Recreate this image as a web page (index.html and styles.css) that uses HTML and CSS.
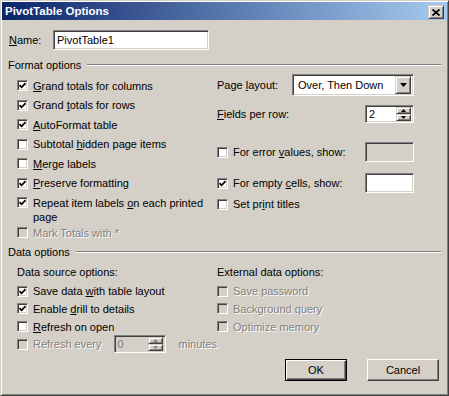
FILE: index.html
```html
<!DOCTYPE html>
<html lang="en">
<head>
    <meta charset="UTF-8">
    <title>PivotTable Options</title>
    <link rel="stylesheet" href="styles.css">
</head>
<body>
<div class="dialog">
    <div class="titlebar">
        <span class="title">PivotTable Options</span>
        <span class="close-btn">
            <svg width="8" height="7" viewBox="0 0 8 7"><path d="M0.5 0.5 7.5 6.5 M7.5 0.5 0.5 6.5" stroke="#000" stroke-width="1.8"/></svg>
        </span>
    </div>

    <div class="body">
        <div class="name-row">
            <span class="name-label"><u>N</u>ame:</span>
            <div class="field name-field">PivotTable1</div>
        </div>

        <div class="group-head"><span>Format options</span><span class="rule"></span></div>
        <div class="group format-group">
            <div class="col left-col">
                <div class="check-row"><span class="box"><svg width="7" height="7" viewBox="0 0 7 7"><path d="M0.5 3.2 2.6 5.3 6.5 1.2" fill="none" stroke="#000" stroke-width="1.7"/></svg></span><span><u>G</u>rand totals for columns</span></div>
                <div class="check-row"><span class="box"><svg width="7" height="7" viewBox="0 0 7 7"><path d="M0.5 3.2 2.6 5.3 6.5 1.2" fill="none" stroke="#000" stroke-width="1.7"/></svg></span><span>Grand <u>t</u>otals for rows</span></div>
                <div class="check-row"><span class="box"><svg width="7" height="7" viewBox="0 0 7 7"><path d="M0.5 3.2 2.6 5.3 6.5 1.2" fill="none" stroke="#000" stroke-width="1.7"/></svg></span><span><u>A</u>utoFormat table</span></div>
                <div class="check-row"><span class="box"></span><span>Subtotal <u>h</u>idden page items</span></div>
                <div class="check-row"><span class="box"></span><span><u>M</u>erge labels</span></div>
                <div class="check-row"><span class="box"><svg width="7" height="7" viewBox="0 0 7 7"><path d="M0.5 3.2 2.6 5.3 6.5 1.2" fill="none" stroke="#000" stroke-width="1.7"/></svg></span><span><u>P</u>reserve formatting</span></div>
                <div class="check-row wrap"><span class="box"><svg width="7" height="7" viewBox="0 0 7 7"><path d="M0.5 3.2 2.6 5.3 6.5 1.2" fill="none" stroke="#000" stroke-width="1.7"/></svg></span><span>Repeat item labels <u>o</u>n each printed<br>page</span></div>
                <div class="check-row mark-row dis"><span class="box off"></span><span>Mark Totals with *</span></div>
            </div>
            <div class="col right-col">
                <div class="ctl-row layout-row">
                    <span>Page <u>l</u>ayout:</span>
                    <div class="select">
                        <span>Over, Then Down</span>
                        <span class="drop"><svg width="7" height="4" viewBox="0 0 7 4"><path d="M0 0H7L3.5 4Z" fill="#000"/></svg></span>
                    </div>
                </div>
                <div class="ctl-row fields-row">
                    <span><u>F</u>ields per row:</span>
                    <div class="spin">
                        <span class="spin-val">2</span>
                        <span class="spin-btns">
                            <span class="spin-btn"><svg width="5" height="3" viewBox="0 0 5 3"><path d="M0 3H5L2.5 0Z" fill="#000"/></svg></span>
                            <span class="spin-btn"><svg width="5" height="3" viewBox="0 0 5 3"><path d="M0 0H5L2.5 3Z" fill="#000"/></svg></span>
                        </span>
                    </div>
                </div>
                <div class="ctl-row error-row">
                    <div class="check-row"><span class="box"></span><span>For error <u>v</u>alues, show:</span></div>
                    <div class="field small-field off"></div>
                </div>
                <div class="ctl-row empty-row">
                    <div class="check-row"><span class="box"><svg width="7" height="7" viewBox="0 0 7 7"><path d="M0.5 3.2 2.6 5.3 6.5 1.2" fill="none" stroke="#000" stroke-width="1.7"/></svg></span><span>For empty <u>c</u>ells, show:</span></div>
                    <div class="field small-field"></div>
                </div>
                <div class="check-row titles-row"><span class="box"></span><span>Set pr<u>i</u>nt titles</span></div>
            </div>
        </div>

        <div class="group-head data-head"><span>Data options</span><span class="rule"></span></div>
        <div class="group data-group">
            <div class="col">
                <div class="sub-label">Data source options:</div>
                <div class="check-row"><span class="box"><svg width="7" height="7" viewBox="0 0 7 7"><path d="M0.5 3.2 2.6 5.3 6.5 1.2" fill="none" stroke="#000" stroke-width="1.7"/></svg></span><span>Save data <u>w</u>ith table layout</span></div>
                <div class="check-row"><span class="box"><svg width="7" height="7" viewBox="0 0 7 7"><path d="M0.5 3.2 2.6 5.3 6.5 1.2" fill="none" stroke="#000" stroke-width="1.7"/></svg></span><span>Enable <u>d</u>rill to details</span></div>
                <div class="check-row"><span class="box"></span><span><u>R</u>efresh on open</span></div>
                <div class="check-row refresh-row dis">
                    <span class="box off"></span>
                    <span class="refresh-label">Refresh every</span>
                    <div class="spin refresh-spin off">
                        <span class="spin-val">0</span>
                        <span class="spin-btns">
                            <span class="spin-btn"><svg width="5" height="3" viewBox="0 0 5 3"><path d="M0 3H5L2.5 0Z" fill="#808080"/></svg></span>
                            <span class="spin-btn"><svg width="5" height="3" viewBox="0 0 5 3"><path d="M0 0H5L2.5 3Z" fill="#808080"/></svg></span>
                        </span>
                    </div>
                    <span class="minutes">minutes</span>
                </div>
            </div>
            <div class="col">
                <div class="sub-label">External data options:</div>
                <div class="check-row dis"><span class="box off"></span><span>Save password</span></div>
                <div class="check-row dis"><span class="box off"></span><span>Background query</span></div>
                <div class="check-row dis"><span class="box off"></span><span>Optimize memory</span></div>
            </div>
        </div>

        <div class="buttons">
            <div class="btn btn-default">OK</div>
            <div class="btn btn-cancel">Cancel</div>
        </div>
    </div>
</div>
</body>
</html>
```

FILE: styles.css
```css
body {
    margin: 0;
    font-family: "Liberation Sans", Arial, sans-serif;
    font-size: 11px;
    color: #000;
}

.dialog {
    width: 449px;
    height: 396px;
    box-sizing: border-box;
    background-color: #d4d0c8;
    border: 1px solid;
    border-color: #d4d0c8 #404040 #404040 #d4d0c8;
    box-shadow: inset 1px 1px #fff, inset -1px -1px #808080;
    padding: 1px;
}

.titlebar {
    height: 18px;
    display: flex;
    align-items: center;
    justify-content: space-between;
    padding: 0 3px 0 3px;
    background: linear-gradient(to right, #0a246a, #a6caf0);
}

.title {
    color: #fff;
    font-weight: bold;
    font-size: 11.5px;
}

.close-btn,
.drop,
.spin-btn {
    box-sizing: border-box;
    display: flex;
    align-items: center;
    justify-content: center;
    background-color: #d4d0c8;
    border: 1px solid;
    border-color: #d4d0c8 #404040 #404040 #d4d0c8;
    box-shadow: inset 1px 1px #fff, inset -1px -1px #808080;
}

.close-btn {
    width: 16px;
    height: 14px;
    margin-top: 2px;
}

.body {
    padding: 0 6px 0 7px;
}

/* sunken look for fields and boxes */
.field,
.box,
.select,
.spin {
    box-sizing: border-box;
    background-color: #fff;
    border: 1px solid;
    border-color: #808080 #fff #fff #808080;
    box-shadow: inset 1px 1px #404040, inset -1px -1px #d4d0c8;
}

.off {
    background-color: #d4d0c8;
}

.name-row {
    display: flex;
    align-items: center;
    height: 20px;
    margin-top: 10px;
}

.name-label {
    width: 44px;
}

.field {
    height: 20px;
    padding: 0 3px;
    line-height: 18px;
}

.name-field {
    width: 156px;
}

.group-head {
    display: flex;
    align-items: center;
    height: 14px;
    line-height: 14px;
    margin-top: 8px;
    margin-left: -1px;
}

.group-head .rule {
    flex: 1;
    margin-left: 6px;
    border-top: 1px solid #808080;
    border-bottom: 1px solid #fff;
}

.data-head {
    margin-top: 5.5px;
}

.group {
    display: grid;
    grid-template-columns: 200px 197px;
    padding-left: 8px;
}

.col {
    display: flex;
    flex-direction: column;
}

.left-col {
    padding-top: 6.5px;
    gap: 5.5px;
}

.check-row {
    display: flex;
    align-items: center;
    line-height: 14px;
}

.box {
    width: 11px;
    height: 11px;
    flex: none;
    margin-right: 5px;
    display: flex;
    align-items: center;
    justify-content: center;
}

.check-row.wrap {
    align-items: flex-start;
}

.check-row.wrap .box {
    margin-top: 1.5px;
}

.mark-row {
    margin-top: -3.5px;
}

.dis {
    color: #808080;
    text-shadow: 1px 1px 0 #fff;
}

.ctl-row {
    display: flex;
    align-items: center;
    justify-content: space-between;
}

.layout-row {
    height: 22px;
    margin-top: 2px;
}

.fields-row {
    height: 18px;
    margin-top: 9px;
}

.error-row {
    height: 20px;
    margin-top: 19px;
}

.empty-row {
    height: 20px;
    margin-top: 11px;
}

.titles-row {
    margin-top: 4px;
}

.select {
    width: 122px;
    height: 22px;
    display: flex;
    align-items: center;
    justify-content: space-between;
    padding: 2px 2px 2px 5px;
}

.drop {
    width: 16px;
    height: 18px;
}

.spin {
    width: 49px;
    height: 18px;
    display: flex;
    align-items: center;
    padding: 2px;
}

.spin-val {
    padding-left: 1px;
}

.spin-btns {
    margin-left: auto;
    width: 15px;
    height: 14px;
    display: flex;
    flex-direction: column;
}

.spin-btn {
    height: 7px;
}

.small-field {
    width: 49px;
}

.data-group .col {
    padding-top: 5.5px;
}

.sub-label {
    line-height: 14px;
}

.data-group .check-row {
    margin-top: 3.75px;
}

.data-group .sub-label + .check-row {
    margin-top: 5.5px;
}

.data-group .refresh-row {
    height: 18px;
    margin-top: 1.5px;
}

.refresh-label {
    width: 84px;
}

.refresh-spin {
    width: 55px;
    color: #808080;
    text-shadow: none;
}

.minutes {
    margin-left: 12px;
}

.buttons {
    display: flex;
    justify-content: flex-end;
    gap: 20px;
    margin-top: 6px;
    padding-right: 2px;
}

.btn {
    height: 22px;
    box-sizing: border-box;
    display: flex;
    align-items: center;
    justify-content: center;
    border: 1px solid;
    border-color: #fff #404040 #404040 #fff;
    box-shadow: inset -1px -1px #808080, inset 1px 1px #d4d0c8;
}

.btn-default {
    width: 62px;
    border-color: #000;
    box-shadow: inset 1px 1px #fff, inset -1px -1px #404040, inset -2px -2px #808080;
}

.btn-cancel {
    width: 72px;
}
```
